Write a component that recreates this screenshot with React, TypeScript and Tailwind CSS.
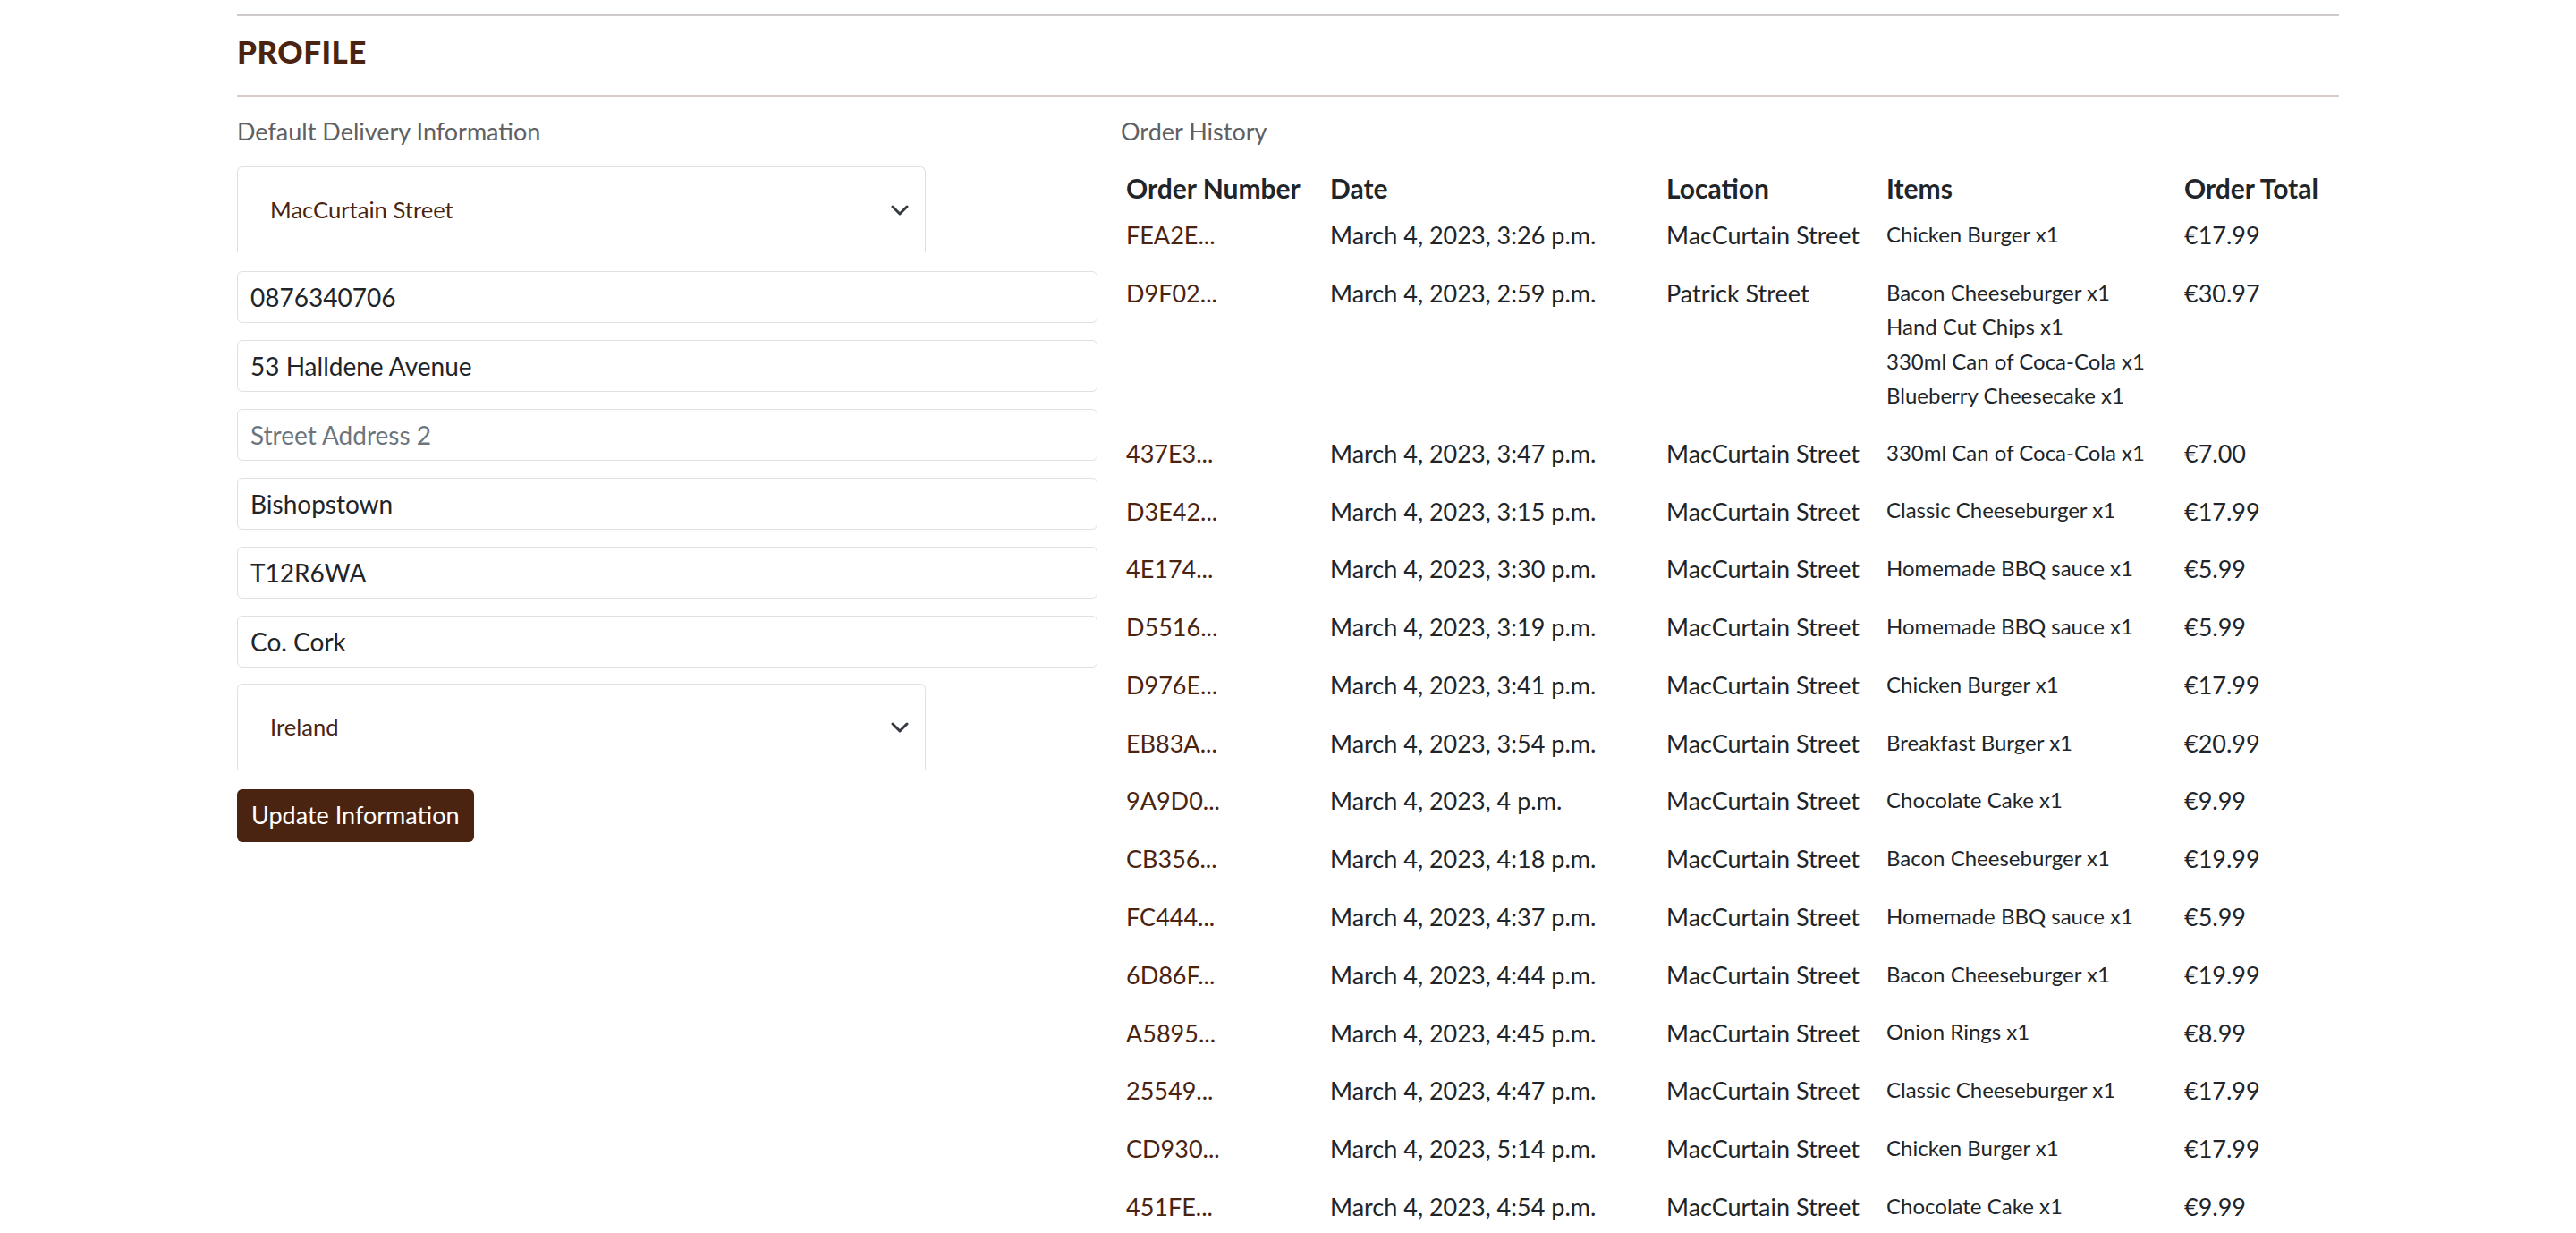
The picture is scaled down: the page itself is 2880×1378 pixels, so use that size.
import React from 'react';

const font = { fontFamily: 'Lato, "Open Sans", sans-serif' };

interface Order {
  id: string;
  date: string;
  location: string;
  items: string[];
  total: string;
}

const orders: Order[] = [
  { id: 'FEA2E...', date: 'March 4, 2023, 3:26 p.m.', location: 'MacCurtain Street', items: ['Chicken Burger x1'], total: '€17.99' },
  {
    id: 'D9F02...',
    date: 'March 4, 2023, 2:59 p.m.',
    location: 'Patrick Street',
    items: ['Bacon Cheeseburger x1', 'Hand Cut Chips x1', '330ml Can of Coca-Cola x1', 'Blueberry Cheesecake x1'],
    total: '€30.97',
  },
  { id: '437E3...', date: 'March 4, 2023, 3:47 p.m.', location: 'MacCurtain Street', items: ['330ml Can of Coca-Cola x1'], total: '€7.00' },
  { id: 'D3E42...', date: 'March 4, 2023, 3:15 p.m.', location: 'MacCurtain Street', items: ['Classic Cheeseburger x1'], total: '€17.99' },
  { id: '4E174...', date: 'March 4, 2023, 3:30 p.m.', location: 'MacCurtain Street', items: ['Homemade BBQ sauce x1'], total: '€5.99' },
  { id: 'D5516...', date: 'March 4, 2023, 3:19 p.m.', location: 'MacCurtain Street', items: ['Homemade BBQ sauce x1'], total: '€5.99' },
  { id: 'D976E...', date: 'March 4, 2023, 3:41 p.m.', location: 'MacCurtain Street', items: ['Chicken Burger x1'], total: '€17.99' },
  { id: 'EB83A...', date: 'March 4, 2023, 3:54 p.m.', location: 'MacCurtain Street', items: ['Breakfast Burger x1'], total: '€20.99' },
  { id: '9A9D0...', date: 'March 4, 2023, 4 p.m.', location: 'MacCurtain Street', items: ['Chocolate Cake x1'], total: '€9.99' },
  { id: 'CB356...', date: 'March 4, 2023, 4:18 p.m.', location: 'MacCurtain Street', items: ['Bacon Cheeseburger x1'], total: '€19.99' },
  { id: 'FC444...', date: 'March 4, 2023, 4:37 p.m.', location: 'MacCurtain Street', items: ['Homemade BBQ sauce x1'], total: '€5.99' },
  { id: '6D86F...', date: 'March 4, 2023, 4:44 p.m.', location: 'MacCurtain Street', items: ['Bacon Cheeseburger x1'], total: '€19.99' },
  { id: 'A5895...', date: 'March 4, 2023, 4:45 p.m.', location: 'MacCurtain Street', items: ['Onion Rings x1'], total: '€8.99' },
  { id: '25549...', date: 'March 4, 2023, 4:47 p.m.', location: 'MacCurtain Street', items: ['Classic Cheeseburger x1'], total: '€17.99' },
  { id: 'CD930...', date: 'March 4, 2023, 5:14 p.m.', location: 'MacCurtain Street', items: ['Chicken Burger x1'], total: '€17.99' },
  { id: '451FE...', date: 'March 4, 2023, 4:54 p.m.', location: 'MacCurtain Street', items: ['Chocolate Cake x1'], total: '€9.99' },
];

const fields = [
  { value: '0876340706', placeholder: 'Phone Number' },
  { value: '53 Halldene Avenue', placeholder: 'Street Address 1' },
  { value: '', placeholder: 'Street Address 2' },
  { value: 'Bishopstown', placeholder: 'Town or City' },
  { value: 'T12R6WA', placeholder: 'Postcode' },
  { value: 'Co. Cork', placeholder: 'County' },
];

const Chevron = () => (
  <svg className="w-[20px] h-[12px]" viewBox="0 0 20 12" fill="none">
    <path d="M2 2l8 8 8-8" stroke="#343a40" strokeWidth="3" strokeLinecap="round" strokeLinejoin="round" />
  </svg>
);

// select box in the screenshot is clipped: no bottom border
const FakeSelect = ({ label }: { label: string }) => (
  <div className="h-[96px] w-[770px] border border-b-0 border-[#dee2e6] rounded-t-[6px] flex items-center justify-between pl-[36px] pr-[18px]">
    <span className="text-[25.6px] text-[#4a2411]">{label}</span>
    <Chevron />
  </div>
);

const App: React.FC = () => {
  return (
    <div className="h-screen overflow-hidden bg-white text-[#212529]" style={font}>
      <div className="w-[2350px] mx-auto pt-[16px]">
        <div className="h-[2px] bg-[#cfcbcb]" />
        <h1 className="text-[35px] leading-[78px] pb-[10px] font-black text-[#4a2411] tracking-[0.5px]">PROFILE</h1>
        <div className="h-[2px] bg-[#d9cbc7]" />

        <div className="flex gap-[24px] pt-[15px]">
          {/* Delivery info */}
          <div className="w-[962px] flex-shrink-0">
            <h2 className="text-[27px] leading-[48px] text-[#5f6062]">Default Delivery Information</h2>
            <div className="mt-[15px]">
              <FakeSelect label="MacCurtain Street" />
            </div>
            <div className="mt-[21px] flex flex-col gap-[19px]">
              {fields.map((f) => (
                <input
                  key={f.placeholder}
                  defaultValue={f.value}
                  placeholder={f.placeholder}
                  className="h-[58px] w-full border border-[#dee2e6] rounded-[6px] px-[14px] text-[28px] text-[#212529] placeholder:text-[#6c757d] outline-none"
                  style={font}
                />
              ))}
            </div>
            <div className="mt-[18px]">
              <FakeSelect label="Ireland" />
            </div>
            <button className="mt-[22px] h-[59px] px-[16px] rounded-[6px] bg-[#4a2411] text-white text-[27px]">
              Update Information
            </button>
          </div>

          {/* Order history */}
          <div className="flex-1">
            <h2 className="text-[27px] leading-[48px] text-[#5f6062] pl-[2px]">Order History</h2>
            <table className="table-fixed w-full mt-[18px] text-[27px]">
              <colgroup>
                <col className="w-[228px]" />
                <col className="w-[376px]" />
                <col className="w-[246px]" />
                <col className="w-[333px]" />
                <col />
              </colgroup>
              <thead>
                <tr className="text-left text-[30px]">
                  <th className="px-[8px] leading-[42px] font-bold whitespace-nowrap">Order Number</th>
                  <th className="px-[8px] leading-[42px] font-bold">Date</th>
                  <th className="px-[8px] leading-[42px] font-bold">Location</th>
                  <th className="px-[8px] leading-[42px] font-bold">Items</th>
                  <th className="px-[8px] leading-[42px] font-bold whitespace-nowrap">Order Total</th>
                </tr>
              </thead>
              <tbody>
                {orders.map((o) => (
                  <tr key={o.id + o.date} className="align-top">
                    <td className="px-[8px] py-[13.2px] leading-[38.4px] text-[#4a2411] whitespace-nowrap">{o.id}</td>
                    <td className="px-[8px] py-[13.2px] leading-[38.4px] whitespace-nowrap">{o.date}</td>
                    <td className="px-[8px] py-[13.2px] leading-[38.4px] whitespace-nowrap">{o.location}</td>
                    <td className="px-[8px] pt-[12px] pb-[13.2px] text-[24px] leading-[38.4px] whitespace-nowrap">
                      {o.items.map((it) => (
                        <div key={it}>{it}</div>
                      ))}
                    </td>
                    <td className="px-[8px] py-[13.2px] leading-[38.4px] whitespace-nowrap">{o.total}</td>
                  </tr>
                ))}
              </tbody>
            </table>
          </div>
        </div>
      </div>
    </div>
  );
};

export default App;
